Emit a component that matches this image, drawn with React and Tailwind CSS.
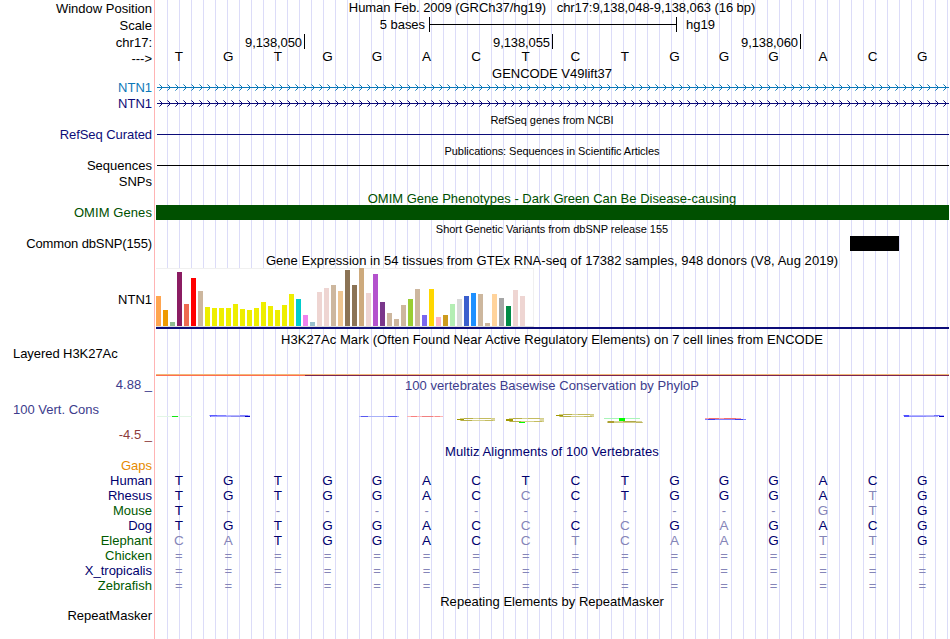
import React from "react";
import clsx from "clsx";

const labels = [
  { text: "Window Position", size: "h-[16px]" },
  { text: "Scale", size: "h-[17px]" },
  { text: "chr17:", size: "h-[17px]" },
  { text: "--->", size: "h-[16px]" },
  { text: "NTN1", size: "h-[29px]", color: "text-[#0c78b8]" },
  { text: "NTN1", size: "h-[16px]", color: "text-[#0c0c78]" },
  { text: "RefSeq Curated", size: "h-[31px]", color: "text-[#0c0c78] tracking-[-0.07px]" },
  { text: "Sequences", size: "h-[31px]" },
  { text: "SNPs", size: "h-[16px]" },
  { text: "OMIM Genes", size: "h-[31px]", color: "text-[#005000] tracking-[0.08px]" },
  { text: "Common dbSNP(155)", size: "h-[31px]", color: "tracking-[-0.12px]" },
  { text: "NTN1", size: "h-[56px]" },
  { text: "Layered H3K27Ac", size: "h-[54px]", left: true, color: "tracking-[-0.06px]" },
  { text: "4.88 _", size: "h-[31px]", color: "text-[#3c3c8c]" },
  { text: "100 Vert. Cons", size: "h-[25px]", color: "text-[#3c3c8c]", left: true },
  { text: "-4.5 _", size: "h-[25px]", color: "text-[#8c3c3c]" },
  { text: "Gaps", size: "h-[31px]", color: "text-[#e68a00]" },
  { text: "Human", size: "h-[15px]", color: "text-[#00006e]" },
  { text: "Rhesus", size: "h-[15px]", color: "text-[#00006e]" },
  { text: "Mouse", size: "h-[15px]", color: "text-[#005a00]" },
  { text: "Dog", size: "h-[15px]", color: "text-[#00006e]" },
  { text: "Elephant", size: "h-[15px]", color: "text-[#005a00]" },
  { text: "Chicken", size: "h-[15px]", color: "text-[#005a00]" },
  { text: "X_tropicalis", size: "h-[15px]", color: "text-[#00006e]" },
  { text: "Zebrafish", size: "h-[15px]", color: "text-[#005a00]" },
  { text: "RepeatMasker", size: "h-[30px]" },
];

// lower case = base differs from the human sequence
const alignments = [
  "TGTGGACTCTGGGACG",
  "TGTGGACcCTGGGAtG",
  "T------------gtG",
  "TGTGGACcCcGaGACG",
  "caTGGACctcaaGttG",
  "================",
  "================",
  "================",
];

const tissues = [
  [30, "#ffa54f"], [16, "#ee9a00"], [4, "#8fbc8f"], [54, "#8b1c62"],
  [22, "#ee6a50"], [48, "#ff0000"], [35, "#cdb79e"], [19, "#eeee00"],
  [18, "#eeee00"], [18, "#eeee00"], [18, "#eeee00"], [22, "#eeee00"],
  [17, "#eeee00"], [16, "#eeee00"], [18, "#eeee00"], [24, "#eeee00"],
  [20, "#eeee00"], [16, "#eeee00"], [21, "#eeee00"], [32, "#eeee00"],
  [27, "#00cdcd"], [11, "#ee82ee"], [4, "#9ac0cd"], [34, "#eed5d2"],
  [38, "#eed5d2"], [41, "#cdb79e"], [35, "#eec591"], [56, "#8b7355"],
  [41, "#8b7355"], [58, "#cdaa7d"], [33, "#eed5d2"], [52, "#b452cd"],
  [24, "#7a378b"], [13, "#cdb79e"], [7, "#cdb79e"], [21, "#cdb79e"],
  [27, "#9acd32"], [37, "#cdb79e"], [11, "#7a67ee"], [37, "#ffd700"],
  [9, "#ffb6c1"], [11, "#cd9b1d"], [22, "#b4eeb4"], [27, "#d9d9d9"],
  [30, "#3a5fcd"], [33, "#1e90ff"], [32, "#cdb79e"], [3, "#cdb79e"],
  [32, "#ffd39b"], [28, "#a6a6a6"], [20, "#008b45"], [36, "#eed5d2"],
  [30, "#eed5d2"], [0, "#ff00ff"],
];

// x, y, width, height, fill of the flattened conservation letters
const conservation = [
  [157, 416, 35, 1, "#e2f6e6"], [172, 416, 6, 1, "#10e810"],
  [209, 415, 41, 1, "#b4b4ff"], [210, 415, 7, 2, "#5c5cff"],
  [217, 415, 9, 1, "#8080ff"], [211, 416, 20, 1, "#a0a0ff"],
  [231, 416, 14, 1, "#8c8cf0"], [240, 415, 8, 1, "#8080ff"],
  [245, 416, 5, 1, "#0000c0"],
  [359, 416, 40, 1, "#a8b0f8"], [361, 416, 7, 1, "#5858f0"],
  [388, 416, 9, 1, "#6464f4"],
  [407, 416, 36, 1, "#ffb4b4"], [411, 416, 6, 1, "#f88080"],
  [422, 416, 11, 1, "#f08080"], [435, 416, 5, 1, "#f88c8c"],
  [705, 418, 36, 1, "#ffa0a0"], [709, 418, 10, 1, "#f07070"],
  [724, 418, 12, 1, "#f07070"], [705, 419, 41, 1, "#8080ff"],
  [708, 419, 7, 1, "#4040f0"], [735, 419, 8, 1, "#4040f0"],
  [903, 415, 41, 1, "#b4b4ff"], [904, 415, 5, 2, "#5050ff"],
  [909, 416, 17, 1, "#8c8cff"], [926, 416, 12, 1, "#a0a0f4"],
  [934, 415, 6, 1, "#7070ff"], [939, 416, 5, 1, "#0000c0"],
  [519, 422, 6, 1, "#00ff00"],
  [604, 418, 36, 1, "#a8f4b8"], [619, 418, 6, 3, "#00ff00"],
  [607, 421, 35, 1, "#d8d498"], [607, 422, 36, 1, "#d0cc88"],
  [608, 421, 6, 2, "#aca030"], [623, 421, 13, 1, "#b0a848"],
  [636, 422, 6, 1, "#bcb460"],
];

const ovals = [
  [457, 418, 3],
  [506, 418, 4],
  [556, 414, 3],
];

const Title = ({ className, small, children }) => (
  <h2
    className={clsx(
      "h-[15px] w-[792px] whitespace-pre text-center leading-[15px]",
      small && "text-[11px]",
      className,
    )}
  >
    {children}
  </h2>
);

const Bases = ({ sequence, className }) => (
  <div
    className={clsx(
      "-ml-[2px] grid h-[15px] w-[793px] grid-cols-[repeat(16,minmax(0,1fr))] text-center text-[13.5px] leading-[16px]",
      className,
    )}
  >
    {sequence.split("").map((base, i) => (
      <span
        key={i}
        className={clsx(
          /[a-z=-]/.test(base) && "text-[#8585b8]",
          /[=-]/.test(base) && "text-[13px]",
        )}
      >
        {base.toUpperCase()}
      </span>
    ))}
  </div>
);

const Transcript = ({ color, className }) => (
  <svg
    className={clsx("block h-[7px] w-[793px]", className)}
    viewBox="0 0 793 7"
    fill={color}
    shapeRendering="crispEdges"
  >
    <rect x="1" y="3" width="792" height="1" />
    {Array.from({ length: 99 }, (_, i) => (
      <g key={i} transform={`translate(${3 + i * 8} 0)`}>
        <path d="M1 1h1v1h-1zM2 2h1v1h-1zM2 4h1v1h-1zM1 5h1v1h-1z" />
        <path d="M0 0h1v1h-1zM0 6h1v1h-1z" opacity="0.6" />
      </g>
    ))}
  </svg>
);

const Expression = () => (
  <div className="h-[61px] border-b-2 border-[#0c0c78]">
    <div className="flex h-[59px] w-[378px] items-end gap-[2px] border-b border-[#dcdcdc] bg-white shadow-[inset_0_1px_#f0f0f0,inset_-1px_0_#f0f0f0]">
      {tissues.map(([height, color], i) => (
        <div
          key={i}
          className="w-[5px]"
          style={{ height, backgroundColor: color }}
        />
      ))}
    </div>
  </div>
);

const Conservation = () => (
  <svg
    className="block h-[51px] w-[793px]"
    viewBox="156 393 793 51"
    shapeRendering="crispEdges"
  >
    {conservation.map(([x, y, width, height, fill], i) => (
      <rect key={i} x={x} y={y} width={width} height={height} fill={fill} />
    ))}
    {ovals.map(([x, y, h], i) => (
      <g key={i} transform={`translate(${x} ${y})`}>
        <rect x="3" width="35" height="1" fill="#d4d08c" />
        <rect x="7" width="9" height="1" fill="#b8b048" />
        <rect x="22" width="12" height="1" fill="#c4bc60" />
        <rect y="1" width="7" height={h - 2} fill="#a09800" />
        <rect x="34" y="1" width="4" height={h - 2} fill="#dcd8a4" />
        <rect x="3" y={h - 1} width="35" height="1" fill="#d4d08c" />
        <rect x="4" y={h - 1} width="11" height="1" fill="#b8b048" />
        <rect x="28" y={h - 1} width="8" height="1" fill="#c4bc60" />
      </g>
    ))}
  </svg>
);

const App = () => {
  return (
    <main className="flex h-[639px] w-[950px] overflow-hidden bg-white font-['Liberation_Sans',Arial,sans-serif] text-[13px] leading-[15px] text-black antialiased">
      <aside className="w-[154px] shrink-0">
        {labels.map(({ text, size, color, left }, i) => (
          <div
            key={i}
            className={clsx(
              "flex items-end whitespace-pre",
              left ? "justify-start pl-[13px]" : "justify-end pr-[2px]",
              size,
              color,
            )}
          >
            {text}
          </div>
        ))}
      </aside>
      <div className="w-px shrink-0 bg-[#ffb4b4]" />
      <section className="ml-px w-[793px] shrink-0 bg-[repeating-linear-gradient(to_right,transparent_0px,transparent_11px,#dcdcf8_11px,#dcdcf8_12px)]">
        <Title className="tracking-[-0.075px]">
          {"Human Feb. 2009 (GRCh37/hg19)   chr17:9,138,048-9,138,063 (16 bp)"}
        </Title>
        <div className="flex h-[19px] items-center">
          <span className="w-[273px] pr-[4px] text-right tracking-[-0.05px]">5 bases</span>
          <div className="flex h-[15px] w-[248px] items-center border-x border-black">
            <div className="h-px w-full bg-black" />
          </div>
          <span className="pl-[9px]">hg19</span>
        </div>
        <div className="flex h-[15px] text-right leading-[17px] tracking-[-0.1px]">
          <span className="w-[149px] border-r border-black pr-[2px]">9,138,050</span>
          <span className="w-[248px] border-r border-black pr-[2px]">9,138,055</span>
          <span className="w-[248px] border-r border-black pr-[2px]">9,138,060</span>
        </div>
        <Bases sequence="TGTGGACTCTGGGACG" />
        <Title className="mt-[2px]">GENCODE V49lift37</Title>
        <Transcript color="#0c78b8" className="mt-[3px]" />
        <Transcript color="#0c0c78" className="mt-[9px]" />
        <Title small className="mt-[6px] tracking-[-0.04px]">
          RefSeq genes from NCBI
        </Title>
        <div className="ml-px mt-[6px] h-px bg-[#0c0c78]" />
        <Title small className="mt-[9px] tracking-[-0.06px]">
          Publications: Sequences in Scientific Articles
        </Title>
        <div className="ml-px mt-[6px] h-px bg-black" />
        <Title className="mt-[25px] text-[#005000]">
          OMIM Gene Phenotypes - Dark Green Can Be Disease-causing
        </Title>
        <div className="-mt-px h-[15px] bg-[#005000]" />
        <Title small className="mt-[2px] tracking-[-0.02px]">
          Short Genetic Variants from dbSNP release 155
        </Title>
        <div className="-mt-px ml-[694px] h-[15px] w-[49px] bg-black" />
        <Title className="mt-[2px] tracking-[0.055px]">
          Gene Expression in 54 tissues from GTEx RNA-seq of 17382 samples, 948 donors (V8, Aug 2019)
        </Title>
        <Expression />
        <Title className="mt-[3px] tracking-[0.05px]">
          H3K27Ac Mark (Often Found Near Active Regulatory Elements) on 7 cell lines from ENCODE
        </Title>
        <div className="mt-[27px] h-px bg-[#f0b878]" />
        <div className="flex h-px">
          <div className="w-[149px] bg-[#ff6e50]" />
          <div className="flex-1 bg-[#7c2450]" />
        </div>
        <Title className="mt-[2px] text-[#3c3c8c] tracking-[0.04px]">
          100 vertebrates Basewise Conservation by PhyloP
        </Title>
        <Conservation />
        <Title className="text-[#00006e] tracking-[0.08px]">
          Multiz Alignments of 100 Vertebrates
        </Title>
        <div className="mt-[14px]">
          {alignments.map((sequence, i) => (
            <Bases key={i} sequence={sequence} className="text-[#00006e]" />
          ))}
        </div>
        <Title className="mt-px tracking-[0.03px]">
          Repeating Elements by RepeatMasker
        </Title>
      </section>
    </main>
  );
};

export default App;
